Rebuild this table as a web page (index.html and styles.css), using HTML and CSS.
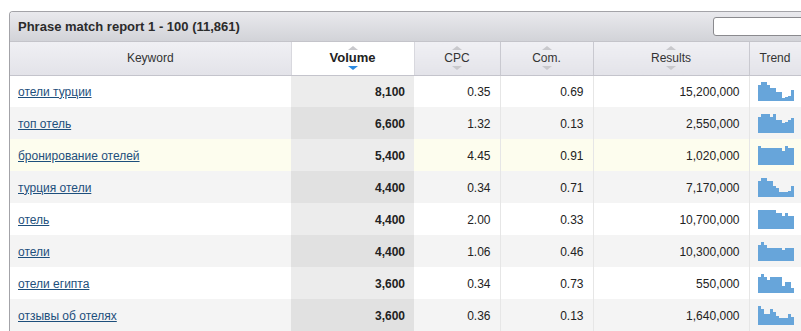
FILE: index.html
```html
<!DOCTYPE html>
<html lang="ru">
<head>
  <meta charset="UTF-8" />
  <title>Phrase match report</title>
  <link rel="stylesheet" href="styles.css">
</head>
<body>

  <div class="panel">
    <!-- Title bar -->
    <div class="panel-head">
      <h3>Phrase match report 1 - 100 (11,861)</h3>
      <input type="text" class="filter" />
    </div>

    <table class="report">
      <colgroup>
        <col class="c-kw"><col class="c-vol"><col class="c-cpc"><col class="c-com"><col class="c-res"><col class="c-trend">
      </colgroup>
      <thead>
        <tr>
          <th class="plain">Keyword</th>
          <th class="sort active"><span class="up"></span>Volume<span class="down"></span></th>
          <th class="sort"><span class="up"></span>CPC<span class="down"></span></th>
          <th class="sort"><span class="up"></span>Com.<span class="down"></span></th>
          <th class="sort"><span class="up"></span>Results<span class="down"></span></th>
          <th class="plain trend-head">Trend</th>
        </tr>
      </thead>
      <tbody id="rows"></tbody>
    </table>
  </div>

  <script>
    const rows = [
      ["отели турции", "8,100", "0.35", "0.69", "15,200,000", [16,19,19,16,13,13,9,9,3,4,5,11]],
      ["топ отель", "6,600", "1.32", "0.13", "2,550,000", [16,19,19,19,16,19,13,13,10,11,13,15]],
      ["бронирование отелей", "5,400", "4.45", "0.91", "1,020,000", [19,17,17,17,17,17,17,17,14,19,17,17]],
      ["турция отели", "4,400", "0.34", "0.71", "7,170,000", [16,19,19,16,16,11,9,5,5,5,6,11]],
      ["отель", "4,400", "2.00", "0.33", "10,700,000", [19,19,19,19,19,19,16,16,13,16,13,13]],
      ["отели", "4,400", "1.06", "0.46", "10,300,000", [16,19,16,13,13,13,13,13,11,13,13,13]],
      ["отели египта", "3,600", "0.34", "0.73", "550,000", [16,19,16,13,16,16,16,16,7,11,11,5]],
      ["отзывы об отелях", "3,600", "0.36", "0.13", "1,640,000", [19,16,11,11,16,13,9,7,7,7,11,8]]
    ];

    const tbody = document.getElementById("rows");

    rows.forEach((r, i) => {
      const tr = document.createElement("tr");
      if (i === 2) tr.classList.add("hover");
      const bars = r[5].map(h => `<span style="height:${h}px"></span>`).join("");
      tr.innerHTML = `
        <td class="kw"><a href="#">${r[0]}</a></td>
        <td class="num vol">${r[1]}</td>
        <td class="num">${r[2]}</td>
        <td class="num sep">${r[3]}</td>
        <td class="num sep">${r[4]}</td>
        <td class="trend sep"><div class="spark">${bars}</div></td>
      `;
      tbody.appendChild(tr);
    });
  </script>
</body>
</html>
```

FILE: styles.css
```css
:root {
  --border: #a3a3a8;
  --link: #1d4f7c;
  --bar: #67a5da;
  --text: #222;
}

* {
  box-sizing: border-box;
}

body {
  margin: 0;
  padding: 11px 0 0 9px;
  font-family: "Liberation Sans", Arial, sans-serif;
  font-size: 12px;
  color: var(--text);
  background: #fff;
  overflow: hidden;
}

.panel {
  width: 830px;
  border-top: 1px solid var(--border);
  border-left: 1px solid var(--border);
  border-top-left-radius: 4px;
  overflow: hidden;
}

.panel-head {
  display: flex;
  align-items: center;
  justify-content: space-between;
  height: 30px;
  padding: 0 0 0 8px;
  background: linear-gradient(#e9e9ed, #d2d3d8);
  border-bottom: 1px solid #c4c4ca;
}

.panel-head h3 {
  margin: 0;
  font-size: 13px;
  font-weight: bold;
  color: #2b2b2b;
}

.filter {
  width: 126px;
  height: 19px;
  margin-right: 0;
  border: 1px solid #8a8a8e;
  border-radius: 3px;
  background: #fff;
}

.report {
  width: 820px;
  border-collapse: collapse;
  table-layout: fixed;
}

.c-kw { width: 281px; }
.c-vol { width: 123px; }
.c-cpc { width: 86px; }
.c-com { width: 93px; }
.c-res { width: 156px; }
.c-trend { width: 81px; }

thead th {
  height: 33px;
  padding: 0;
  font-weight: normal;
  font-size: 12px;
  color: #333;
  background: linear-gradient(#f0f0f4, #e3e3e9);
  border-left: 1px solid #c9c9d0;
  border-bottom: 1px solid #c4c4cc;
  text-align: center;
  vertical-align: middle;
  line-height: 14px;
}

thead th:first-child {
  border-left: none;
}

.trend-head {
  text-align: left;
  padding-left: 10px;
}

th.sort .up,
th.sort .down {
  display: block;
  width: 0;
  height: 0;
  margin: 0 auto;
  border-left: 5px solid transparent;
  border-right: 5px solid transparent;
}

th.sort .up {
  border-bottom: 4px solid #c8c8cc;
  margin-bottom: 1px;
}

th.sort .down {
  border-top: 4px solid #c8c8cc;
  margin-top: 1px;
}

th.active {
  background: #fff;
  font-weight: bold;
  font-size: 13px;
  color: #222;
  border-left: 1px solid #d8d8de;
  border-right: 1px solid #d8d8de;
}

th.active .down {
  border-top-color: #2b8ae2;
}

tbody td {
  height: 32px;
  padding: 1px 8px 0;
  background: #fff;
}

tbody tr:nth-child(even) td {
  background: #f4f4f4;
}

tbody tr.hover td {
  background: #fdfdee;
}

tbody td.vol {
  background: #ececec;
  font-weight: bold;
  padding-right: 9px;
}

tbody tr:nth-child(even) td.vol {
  background: #e1e1e1;
}

tbody tr.hover td.vol {
  background: #ececec;
}

td.sep {
  border-left: 1px solid #e6e6e6;
}

td.num {
  text-align: right;
  padding-right: 9px;
}

.kw a {
  color: var(--link);
  text-decoration: underline;
}

td.trend {
  padding: 1px 0 0 8px;
}

.spark {
  display: flex;
  align-items: flex-end;
  height: 19px;
}

.spark span {
  width: 3px;
  background: var(--bar);
}
```
